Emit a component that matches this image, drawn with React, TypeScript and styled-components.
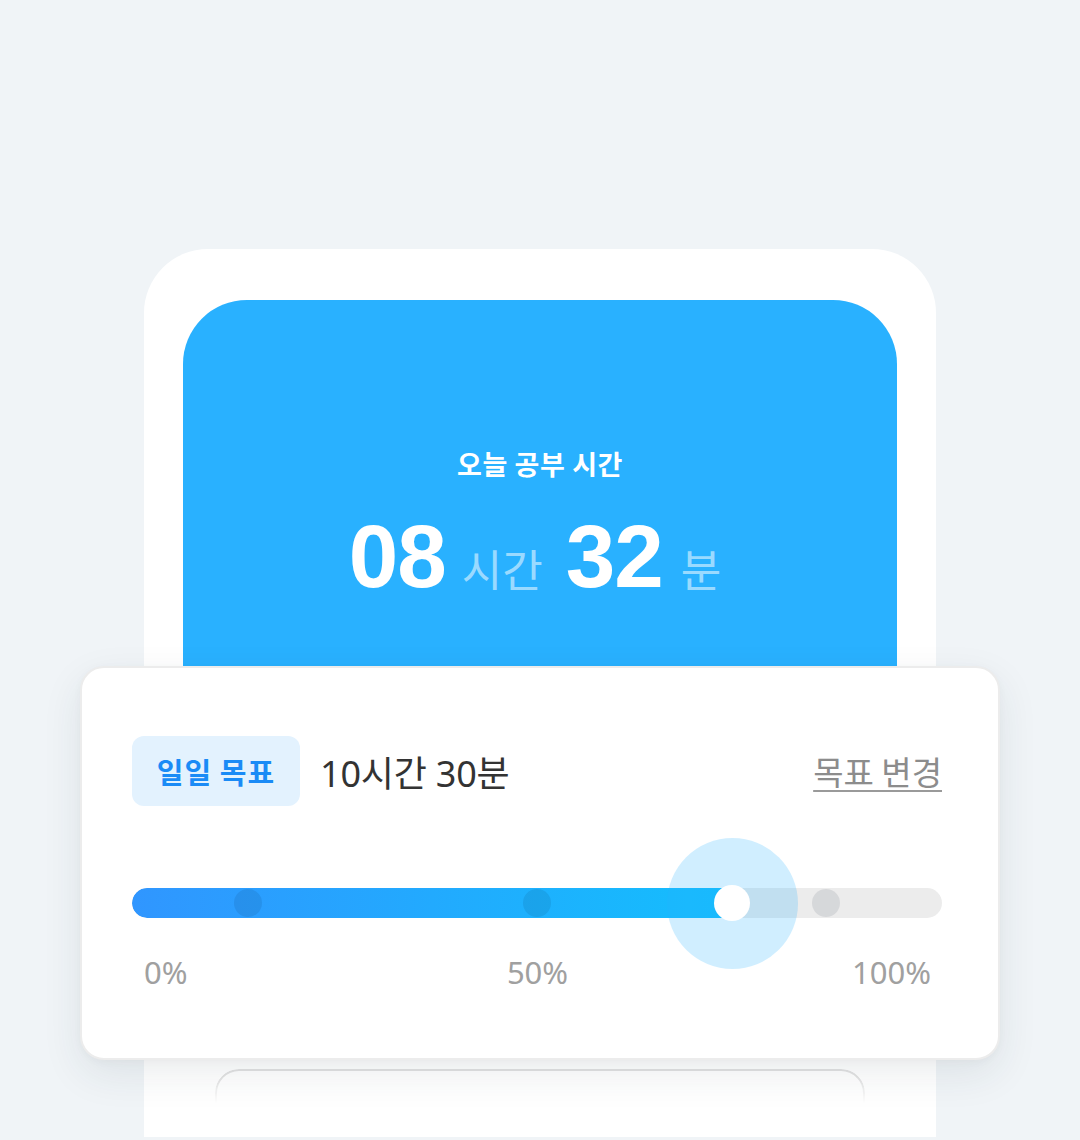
import React from "react";
import styled, { createGlobalStyle } from "styled-components";

const GlobalStyle = createGlobalStyle`
  html, body {
    margin: 0;
    padding: 0;
    background: #f0f4f7;
  }
  body {
    font-family: "Noto Sans", "Noto Sans CJK KR", sans-serif;
    overflow: hidden;
  }
  * { box-sizing: border-box; }
`;

const Page = styled.div`
  width: 1080px;
  height: 1140px;
  padding-top: 249px;
  display: flex;
  flex-direction: column;
  align-items: center;
`;

const Phone = styled.div`
  width: 792px;
  height: 888px;
  background: #ffffff;
  border-radius: 64px 64px 0 0;
  padding: 51px 39px 0;
  display: flex;
  flex-direction: column;
  align-items: stretch;
`;

const HeroCard = styled.section`
  height: 400px;
  background: #29b1ff;
  border-radius: 64px 64px 0 0;
  padding-top: 146px;
  display: flex;
  flex-direction: column;
  align-items: center;
`;

const HeroLabel = styled.div`
  font-family: "Noto Sans CJK KR", "Noto Sans", sans-serif;
  font-weight: 700;
  font-size: 27px;
  line-height: 36px;
  color: #ffffff;
  letter-spacing: 0.6px;
`;

const TimeRow = styled.div`
  margin-top: 26px;
  display: flex;
  align-items: baseline;
  padding-right: 10px;
`;

const Num = styled.span<{ $gap?: number }>`
  font-family: "Liberation Sans", Arial, sans-serif;
  font-weight: 700;
  font-size: 89px;
  line-height: 96px;
  color: #ffffff;
  letter-spacing: -1px;
  margin-left: ${(p) => p.$gap ?? 0}px;
`;

const Unit = styled.span<{ $gap?: number }>`
  font-family: "Noto Sans CJK KR", "Noto Sans", sans-serif;
  font-weight: 400;
  font-size: 44px;
  color: rgba(255, 255, 255, 0.55);
  margin-left: ${(p) => p.$gap ?? 0}px;
`;

const GoalCard = styled.section`
  margin: -34px -103px 0;
  border: 2px solid #ececec;
  border-radius: 24px;
  background: #ffffff;
  padding: 68px 56px 66px 50px;
  box-shadow: 0 14px 40px rgba(30, 50, 70, 0.09), 0 2px 8px rgba(0, 0, 0, 0.03);
  position: relative;
  z-index: 1;
`;

const GoalRow = styled.div`
  display: flex;
  align-items: center;
  height: 70px;
`;

const Badge = styled.span`
  display: inline-flex;
  align-items: center;
  justify-content: center;
  height: 70px;
  width: 168px;
  border-radius: 12px;
  background: #e3f2fe;
  color: #1a8bf6;
  font-family: "Noto Sans CJK KR", "Noto Sans", sans-serif;
  font-weight: 700;
  font-size: 29px;
  letter-spacing: 1px;
`;

const GoalValue = styled.span`
  margin-left: 20px;
  font-family: "Noto Sans", "Noto Sans CJK KR", sans-serif;
  font-size: 36px;
  color: #333333;
  letter-spacing: -0.2px;
`;

const ChangeLink = styled.a`
  margin-left: auto;
  font-family: "Noto Sans CJK KR", "Noto Sans", sans-serif;
  font-size: 33px;
  color: #8c8c8c;
  text-decoration: underline;
  text-decoration-thickness: 2px;
  text-underline-offset: 5px;
  text-decoration-color: #9a9a9a;
  cursor: pointer;
`;

const Slider = styled.div`
  margin-top: 82px;
  position: relative;
  height: 30px;
`;

const Track = styled.div`
  height: 30px;
  border-radius: 15px;
  background: #ececec;
  overflow: hidden;
`;

const Fill = styled.div`
  height: 100%;
  border-radius: 15px 0 0 15px;
  background: linear-gradient(90deg, #3096ff 0%, #14befd 100%);
`;

const Tick = styled.span`
  position: absolute;
  top: 1px;
  width: 28px;
  height: 28px;
  margin-left: -14px;
  border-radius: 50%;
  background: rgba(0, 20, 40, 0.09);
`;

const Halo = styled.span`
  position: absolute;
  top: 50%;
  width: 131px;
  height: 131px;
  margin: -65.5px 0 0 -65.5px;
  border-radius: 50%;
  background: rgba(41, 177, 255, 0.22);
`;

const Thumb = styled.span`
  position: absolute;
  top: 50%;
  width: 36px;
  height: 36px;
  margin: -18px 0 0 -18px;
  border-radius: 50%;
  background: #ffffff;
`;

const Labels = styled.div`
  margin-top: 34px;
  display: grid;
  grid-template-columns: 1fr auto 1fr;
  padding: 0 11px 0 12px;
  font-family: "Noto Sans", sans-serif;
  font-size: 31px;
  line-height: 40px;
  color: #a0a0a0;
`;

const Label = styled.span<{ $align: "start" | "center" | "end" }>`
  justify-self: ${(p) => p.$align};
`;

const NextCard = styled.div`
  margin: 9px 32px 0;
  height: 68px;
  border: 2px solid #e2e2e2;
  border-bottom: none;
  border-radius: 24px 24px 0 0;
  -webkit-mask-image: linear-gradient(to bottom, #000 0px, #000 8px, transparent 34px);
  mask-image: linear-gradient(to bottom, #000 0px, #000 8px, transparent 34px);
`;

const progress = 600 / 810;
const ticks = [1 / 7, 1 / 2, 6 / 7];

export default function App() {
  return (
    <>
      <GlobalStyle />
      <Page>
        <Phone>
          <HeroCard>
            <HeroLabel>오늘 공부 시간</HeroLabel>
            <TimeRow>
              <Num>08</Num>
              <Unit $gap={16}>시간</Unit>
              <Num $gap={23}>32</Num>
              <Unit $gap={18}>분</Unit>
            </TimeRow>
          </HeroCard>
          <GoalCard>
            <GoalRow>
              <Badge>일일 목표</Badge>
              <GoalValue>10시간 30분</GoalValue>
              <ChangeLink>목표 변경</ChangeLink>
            </GoalRow>
            <Slider>
              <Track>
                <Fill style={{ width: `${progress * 100}%` }} />
              </Track>
              {ticks.map((t) => (
                <Tick key={t} style={{ left: `${t * 100}%` }} />
              ))}
              <Halo style={{ left: `${progress * 100}%` }} />
              <Thumb style={{ left: `${progress * 100}%` }} />
            </Slider>
            <Labels>
              <Label $align="start">0%</Label>
              <Label $align="center">50%</Label>
              <Label $align="end">100%</Label>
            </Labels>
          </GoalCard>
          <NextCard />
        </Phone>
      </Page>
    </>
  );
}
